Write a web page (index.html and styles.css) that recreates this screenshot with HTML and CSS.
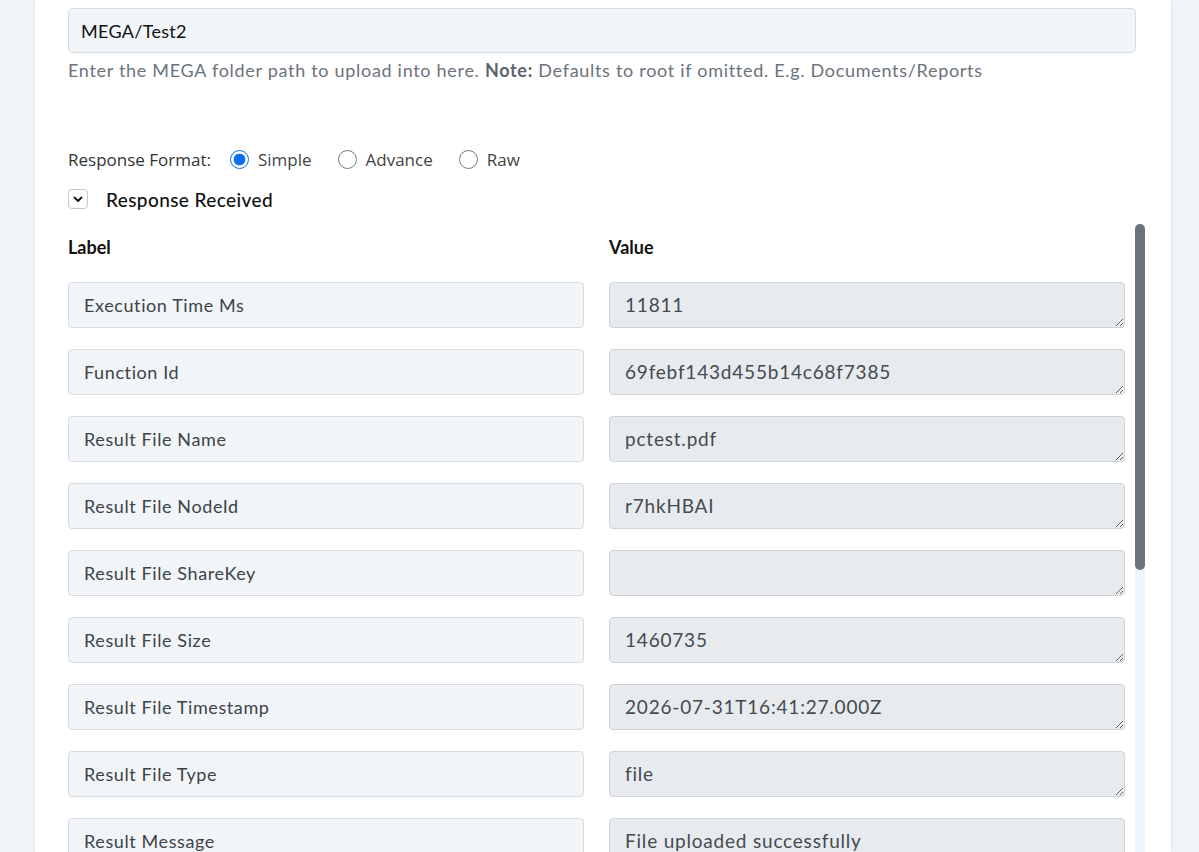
FILE: index.html
```html
<!DOCTYPE html>
<html lang="en">
<head>
    <meta charset="UTF-8">
    <meta name="viewport" content="width=device-width, initial-scale=1.0">
    <title>MEGA Upload - Response</title>
    <link rel="stylesheet" href="styles.css">
</head>
<body>

    <div class="card">
        <input type="text" class="path-input" value="MEGA/Test2">
        <p class="help-text">Enter the MEGA folder path to upload into here. <b>Note:</b> Defaults to root if omitted. E.g. Documents/Reports</p>

        <div class="format-row">
            <span class="format-label">Response Format:</span>
            <label class="radio"><input type="radio" name="format" checked> Simple</label>
            <label class="radio"><input type="radio" name="format"> Advance</label>
            <label class="radio"><input type="radio" name="format"> Raw</label>
        </div>

        <div class="toggle-row">
            <span class="toggle-box">
                <svg width="10" height="7" viewBox="0 0 10 7"><path d="M1.5 1.5 L5 5 L8.5 1.5" fill="none" stroke="#111" stroke-width="1.8" stroke-linecap="round" stroke-linejoin="round"/></svg>
            </span>
            <span class="toggle-title">Response Received</span>
        </div>

        <div class="response-wrap">
            <div class="response-scroll">
                <div class="response-table" id="response-table">
                    <div class="col-head">Label</div>
                    <div class="col-head">Value</div>
                    <!-- rows are filled in below -->
                </div>
            </div>
            <div class="scroll-track"><div class="scroll-thumb"></div></div>
        </div>
    </div>

    <script>
        // Fields returned by the upload step
        const fields = [
            ["Execution Time Ms", "11811"],
            ["Function Id", "69febf143d455b14c68f7385"],
            ["Result File Name", "pctest.pdf"],
            ["Result File NodeId", "r7hkHBAI"],
            ["Result File ShareKey", ""],
            ["Result File Size", "1460735"],
            ["Result File Timestamp", "2026-07-31T16:41:27.000Z"],
            ["Result File Type", "file"],
            ["Result Message", "File uploaded successfully"],
            ["Result Success", "true"]
        ];

        const table = document.getElementById("response-table");
        fields.forEach(([label, value]) => {
            const labelBox = document.createElement("input");
            labelBox.type = "text";
            labelBox.className = "field-label";
            labelBox.value = label;
            labelBox.readOnly = true;

            const valueBox = document.createElement("textarea");
            valueBox.className = "field-value";
            valueBox.rows = 1;
            valueBox.value = value;
            valueBox.readOnly = true;

            table.appendChild(labelBox);
            table.appendChild(valueBox);
        });
    </script>

</body>
</html>
```

FILE: styles.css
```css
html, body {
    height: 100%;
    overflow: hidden;
}
body {
    margin: 0;
    background-color: #f2f5f8;
    font-family: Lato, "Open Sans", sans-serif;
    color: #333;
}
.card {
    box-sizing: border-box;
    width: 1136px;
    height: 852px;
    margin-left: 35px;
    padding: 8px 33px 0;
    background-color: #fff;
    box-shadow: 0 0 6px rgba(120, 140, 160, 0.18);
}
.path-input {
    box-sizing: border-box;
    display: block;
    width: 1068px;
    height: 45px;
    margin: 0;
    padding: 0 12px;
    border: 1px solid #d7dce2;
    border-radius: 5px;
    background-color: #f2f5f8;
    font-family: Lato, sans-serif;
    font-size: 18px;
    letter-spacing: 0.3px;
    color: #111;
    outline: none;
}
.help-text {
    margin: 5px 0 0;
    font-size: 18px;
    letter-spacing: 0.7px;
    line-height: 24px;
    color: #6b737c;
}
.help-text b {
    color: #5b636c;
}
.format-row {
    display: flex;
    align-items: center;
    margin-top: 65px;
    height: 24px;
    font-family: "Open Sans", sans-serif;
    font-size: 17px;
    color: #333;
}
.format-label {
    margin-right: 19px;
}
.radio {
    display: flex;
    align-items: center;
    gap: 9px;
    margin-right: 26px;
    color: #444;
}
.radio input {
    appearance: none;
    width: 19px;
    height: 19px;
    margin: 0;
    border: 1px solid #7a7a7a;
    border-radius: 50%;
    background: #fff;
}
.radio input:checked {
    border: 1.5px solid #0b6cf2;
    background: radial-gradient(circle, #0b6cf2 0 5.5px, #fff 6.2px);
}
.toggle-row {
    display: flex;
    align-items: center;
    margin-top: 16px;
    height: 24px;
}
.toggle-box {
    box-sizing: border-box;
    display: flex;
    align-items: center;
    justify-content: center;
    width: 20px;
    height: 20px;
    border: 1px solid #c4c8cc;
    border-radius: 4px;
}
.toggle-title {
    margin-left: 18px;
    font-size: 19px;
    font-weight: 500;
    letter-spacing: 0.4px;
    color: #111;
}
.response-wrap {
    display: flex;
    width: 1077px;
    height: 640px;
    margin-top: 13px;
}
.response-scroll {
    flex: 1;
    padding-right: 10px;
    overflow: hidden;
}
.scroll-track {
    width: 10px;
    background: #eef4fc;
}
.scroll-thumb {
    height: 346px;
    background: #6c737b;
    border-radius: 5px;
}
.response-table {
    display: grid;
    grid-template-columns: 516px 516px;
    column-gap: 25px;
    row-gap: 21px;
}
.col-head {
    font-size: 18px;
    font-weight: 700;
    color: #111;
    line-height: 22px;
    margin: 12px 0 3px;
}
.field-label,
.field-value {
    box-sizing: border-box;
    width: 516px;
    height: 46px;
    margin: 0;
    border-radius: 4px;
    font-family: Lato, sans-serif;
    outline: none;
}
.field-label {
    padding: 0 15px;
    border: 1px solid #d7dce2;
    background-color: #f2f5f8;
    font-size: 18px;
    letter-spacing: 0.6px;
    color: #3d4349;
}
.field-value {
    padding: 10px 15px;
    line-height: 24px;
    border: 1px solid #ced3d9;
    background-color: #e8ebee;
    font-size: 19px;
    letter-spacing: 0.8px;
    color: #444a50;
    resize: vertical;
    overflow: hidden;
}
```
